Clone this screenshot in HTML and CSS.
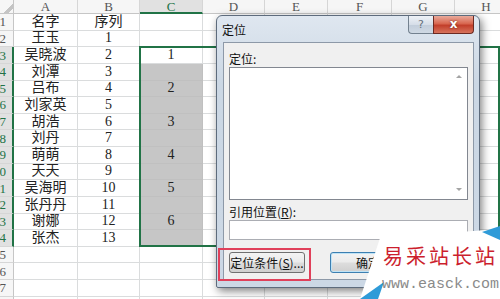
FILE: index.html
```html
<!DOCTYPE html>
<html lang="zh-CN">

<head>
    <meta charset="UTF-8">
    <title>定位</title>
    <link rel="stylesheet" href="styles.css">
</head>

<body>
    <div class="page">
        <div class="sheet">
            <div class="corner"></div><div class="ch">A</div><div class="ch">B</div><div class="ch sel">C</div><div class="ch">D</div><div class="ch">E</div><div class="ch">F</div><div class="ch">G</div><div class="ch">H</div>

            <div class="rh"><span>1</span></div><div class="c">名字</div><div class="c">序列</div><div class="c"></div><div class="c"></div><div class="c"></div><div class="c"></div><div class="c"></div><div class="c"></div>
            <div class="rh"><span>2</span></div><div class="c">王玉</div><div class="c">1</div><div class="c"></div><div class="c"></div><div class="c"></div><div class="c"></div><div class="c"></div><div class="c"></div>
            <div class="rh sel"><span>3</span></div><div class="c">吴晓波</div><div class="c">2</div><div class="c act">1</div><div class="c"></div><div class="c"></div><div class="c"></div><div class="c"></div><div class="c"></div>
            <div class="rh sel"><span>4</span></div><div class="c">刘潭</div><div class="c">3</div><div class="c g"></div><div class="c"></div><div class="c"></div><div class="c"></div><div class="c"></div><div class="c"></div>
            <div class="rh sel"><span>5</span></div><div class="c">吕布</div><div class="c">4</div><div class="c g">2</div><div class="c"></div><div class="c"></div><div class="c"></div><div class="c"></div><div class="c"></div>
            <div class="rh sel"><span>6</span></div><div class="c">刘家英</div><div class="c">5</div><div class="c g"></div><div class="c"></div><div class="c"></div><div class="c"></div><div class="c"></div><div class="c"></div>
            <div class="rh sel"><span>7</span></div><div class="c">胡浩</div><div class="c">6</div><div class="c g">3</div><div class="c"></div><div class="c"></div><div class="c"></div><div class="c"></div><div class="c"></div>
            <div class="rh sel"><span>8</span></div><div class="c">刘丹</div><div class="c">7</div><div class="c g"></div><div class="c"></div><div class="c"></div><div class="c"></div><div class="c"></div><div class="c"></div>
            <div class="rh sel"><span>9</span></div><div class="c">萌萌</div><div class="c">8</div><div class="c g">4</div><div class="c"></div><div class="c"></div><div class="c"></div><div class="c"></div><div class="c"></div>
            <div class="rh sel"><span>10</span></div><div class="c">天天</div><div class="c">9</div><div class="c g"></div><div class="c"></div><div class="c"></div><div class="c"></div><div class="c"></div><div class="c"></div>
            <div class="rh sel"><span>11</span></div><div class="c">吴海明</div><div class="c">10</div><div class="c g">5</div><div class="c"></div><div class="c"></div><div class="c"></div><div class="c"></div><div class="c"></div>
            <div class="rh sel"><span>12</span></div><div class="c">张丹丹</div><div class="c">11</div><div class="c g"></div><div class="c"></div><div class="c"></div><div class="c"></div><div class="c"></div><div class="c"></div>
            <div class="rh sel"><span>13</span></div><div class="c">谢娜</div><div class="c">12</div><div class="c g">6</div><div class="c"></div><div class="c"></div><div class="c"></div><div class="c"></div><div class="c"></div>
            <div class="rh sel"><span>14</span></div><div class="c">张杰</div><div class="c">13</div><div class="c g"></div><div class="c"></div><div class="c"></div><div class="c"></div><div class="c"></div><div class="c"></div>
            <div class="rh"><span>15</span></div><div class="c"></div><div class="c"></div><div class="c"></div><div class="c"></div><div class="c"></div><div class="c"></div><div class="c"></div><div class="c"></div>
            <div class="rh"><span>16</span></div><div class="c"></div><div class="c"></div><div class="c"></div><div class="c"></div><div class="c"></div><div class="c"></div><div class="c"></div><div class="c"></div>
            <div class="rh"><span>17</span></div><div class="c"></div><div class="c"></div><div class="c"></div><div class="c"></div><div class="c"></div><div class="c"></div><div class="c"></div><div class="c"></div>
            <div class="rh"><span>18</span></div><div class="c"></div><div class="c"></div><div class="c"></div><div class="c"></div><div class="c"></div><div class="c"></div><div class="c"></div><div class="c"></div>

            <!-- selected range C3:C14, drawn over the cells -->
            <div class="selection"><span class="handle"></span></div>
        </div>

        <div class="dialog">
            <div class="titlebar">
                <div class="title">定位</div>
                <div class="caption">
                    <div class="btn-help">?</div>
                    <div class="btn-close">x</div>
                </div>
            </div>
            <div class="panel">
                <div class="label">定位:</div>
                <div class="listbox">
                    <div class="scroll">
                        <span class="arrow up"></span>
                        <span class="arrow down"></span>
                    </div>
                </div>
                <div class="label label-ref">引用位置(<u>R</u>):</div>
                <div class="input"></div>
                <div class="buttons">
                    <div class="btn">定位条件(<u>S</u>)...</div>
                    <div class="btn default">确定</div>
                </div>
            </div>
        </div>

        <div class="mark"></div>

        <div class="watermark">
            <svg class="wm-bg" width="140" height="73" viewBox="0 0 140 73">
                <polygon points="20,12 140,3 140,73 0,73" fill="#ffffff" />
                <polygon points="122,6 140,0 140,14" fill="#2f9bd8" />
                <polygon points="0,73 24,56 18,73" fill="#2f9bd8" />
            </svg>
            <div class="wm-name">易采站长站</div>
            <div class="wm-url">www.easck.com</div>
        </div>
    </div>
</body>

</html>
```

FILE: styles.css
```css
html,
body {
    margin: 0;
    padding: 0;
}

body {
    font-family: "Liberation Serif", "Noto Sans CJK SC", serif;
    background: #fff;
}

.page {
    position: relative;
    width: 500px;
    height: 299px;
    overflow: hidden;
    background: #fff;
}

/* spreadsheet */

.sheet {
    position: relative;
    display: grid;
    grid-template-columns: 14px 64px 62px 63px 62px 63px 64px 63px 63px;
    grid-template-rows: 14px repeat(18, 16.64px);
}

.corner {
    background: #f6f6f6 linear-gradient(135deg, transparent 62%, #c4c4c4 62%, #c4c4c4 82%, transparent 82%);
    border-right: 1px solid #c6c6c6;
    border-bottom: 1px solid #c6c6c6;
}

.ch {
    display: flex;
    align-items: center;
    justify-content: center;
    background: #f6f6f6;
    border-right: 1px solid #d6d6d6;
    border-bottom: 1px solid #c6c6c6;
    font-size: 13px;
    color: #555;
    line-height: 1;
}

.ch.sel {
    background: #e1e1e1;
    color: #217346;
    border-bottom: 2px solid #217346;
}

.rh {
    display: flex;
    align-items: center;
    justify-content: flex-end;
    padding-right: 7px;
    overflow: hidden;
    background: #f6f6f6;
    border-right: 1px solid #c6c6c6;
    border-bottom: 1px solid #d6d6d6;
    font-size: 13px;
    color: #555;
    line-height: 1;
    white-space: nowrap;
}

.rh.sel {
    background: #e1e1e1;
    color: #217346;
    border-right: 2px solid #217346;
    padding-right: 6px;
}

.c {
    display: flex;
    align-items: center;
    justify-content: center;
    border-right: 1px solid #dadcdd;
    border-bottom: 1px solid #dadcdd;
    font-size: 14px;
    color: #222;
    line-height: 1;
    white-space: nowrap;
    overflow: hidden;
}

.c.g {
    background: #c6c6c6;
    border-bottom-color: #c0c0c0;
    border-right-color: #c0c0c0;
}

.selection {
    position: absolute;
    grid-column: 4;
    grid-row: 4 / 16;
    top: -1px;
    left: -1px;
    right: 0;
    bottom: 0;
    border: 2px solid #217346;
}

.handle {
    position: absolute;
    right: -4px;
    bottom: -4px;
    width: 5px;
    height: 5px;
    background: #217346;
    border: 1px solid #fff;
}

/* dialog */

.dialog {
    position: absolute;
    left: 216px;
    top: 15px;
    width: 264px;
    height: 273px;
    box-sizing: border-box;
    display: flex;
    flex-direction: column;
    border: 1px solid #5d6b7c;
    border-radius: 6px 6px 2px 2px;
    background: linear-gradient(#dfe7f0, #cbd7e4 25%, #ccd8e5);
    box-shadow: 2px 3px 8px rgba(0, 0, 0, .5);
    font-family: "Noto Sans CJK SC", sans-serif;
    font-size: 12px;
    color: #111;
}

.titlebar {
    height: 26px;
    display: flex;
    justify-content: space-between;
    align-items: flex-start;
    padding-right: 5px;
}

.title {
    padding: 6px 0 0 5px;
    line-height: 16px;
}

.caption {
    display: flex;
}

.btn-help {
    width: 25px;
    height: 18px;
    box-sizing: border-box;
    border: 1px solid #73818f;
    border-top: none;
    border-right: none;
    border-radius: 0 0 0 4px;
    background: linear-gradient(#eef2f7, #d6dee8 50%, #c3cedb 55%, #cfd9e4);
    color: #66707c;
    font-family: "DejaVu Sans", sans-serif;
    font-size: 11px;
    line-height: 17px;
    text-align: center;
}

.btn-close {
    width: 41px;
    height: 18px;
    box-sizing: border-box;
    border: 1px solid #6c2a22;
    border-top: none;
    border-radius: 0 0 4px 0;
    background: linear-gradient(#e9aa9b, #d8664f 45%, #c23f2b 55%, #d7735c);
    color: #fff;
    font-family: "DejaVu Sans", sans-serif;
    font-weight: bold;
    font-size: 12px;
    line-height: 16px;
    text-align: center;
    text-shadow: 0 0 2px #5a1a12;
}

.panel {
    flex: 1;
    margin: 0 5px 7px 6px;
    padding: 8px 5px 0;
    display: flex;
    flex-direction: column;
    background: #f0f0f0;
    border: 1px solid #8d99a8;
}

.label {
    line-height: 16px;
    height: 16px;
}

.label-ref {
    margin-top: 4px;
}

.listbox {
    height: 133px;
    box-sizing: border-box;
    display: flex;
    justify-content: flex-end;
    background: #fff;
    border: 1px solid #828790;
}

.scroll {
    width: 17px;
    display: flex;
    flex-direction: column;
    justify-content: space-between;
    align-items: center;
    padding: 7px 0 8px;
}

.arrow {
    width: 0;
    height: 0;
    border-left: 3px solid transparent;
    border-right: 3px solid transparent;
}

.arrow.up {
    border-bottom: 3px solid #a4a4a4;
}

.arrow.down {
    border-top: 3px solid #a4a4a4;
}

.input {
    height: 20px;
    box-sizing: border-box;
    background: #fff;
    border: 1px solid #abadb3;
}

.buttons {
    display: flex;
    gap: 25px;
    margin-top: 12px;
}

.btn {
    width: 76px;
    height: 21px;
    box-sizing: border-box;
    border: 1px solid #707070;
    border-radius: 3px;
    background: linear-gradient(#f3f3f3, #ebebeb 48%, #dddddd 52%, #cfcfcf);
    line-height: 19px;
    text-align: center;
    white-space: nowrap;
}

.btn.default {
    border-color: #3c7fb1;
    box-shadow: inset 0 0 0 1px #bfe3f6;
}

/* annotation */

.mark {
    position: absolute;
    left: 218px;
    top: 248px;
    width: 93px;
    height: 33px;
    box-sizing: border-box;
    border: 2px solid #e0405a;
}

/* watermark */

.watermark {
    position: absolute;
    left: 360px;
    top: 226px;
    width: 140px;
    height: 73px;
    padding-top: 19px;
    box-sizing: border-box;
}

.wm-bg {
    position: absolute;
    left: 0;
    top: 0;
}

.wm-name {
    position: relative;
    padding-left: 23px;
    font-family: "Noto Sans CJK SC", serif;
    font-size: 20px;
    line-height: 22px;
    letter-spacing: 3px;
    color: #cc1f2e;
    white-space: nowrap;
}

.wm-url {
    position: relative;
    margin-top: 10px;
    padding-left: 22px;
    font-family: "Liberation Mono", monospace;
    font-size: 15px;
    line-height: 16px;
    color: #8a8a8a;
    white-space: nowrap;
}
```
